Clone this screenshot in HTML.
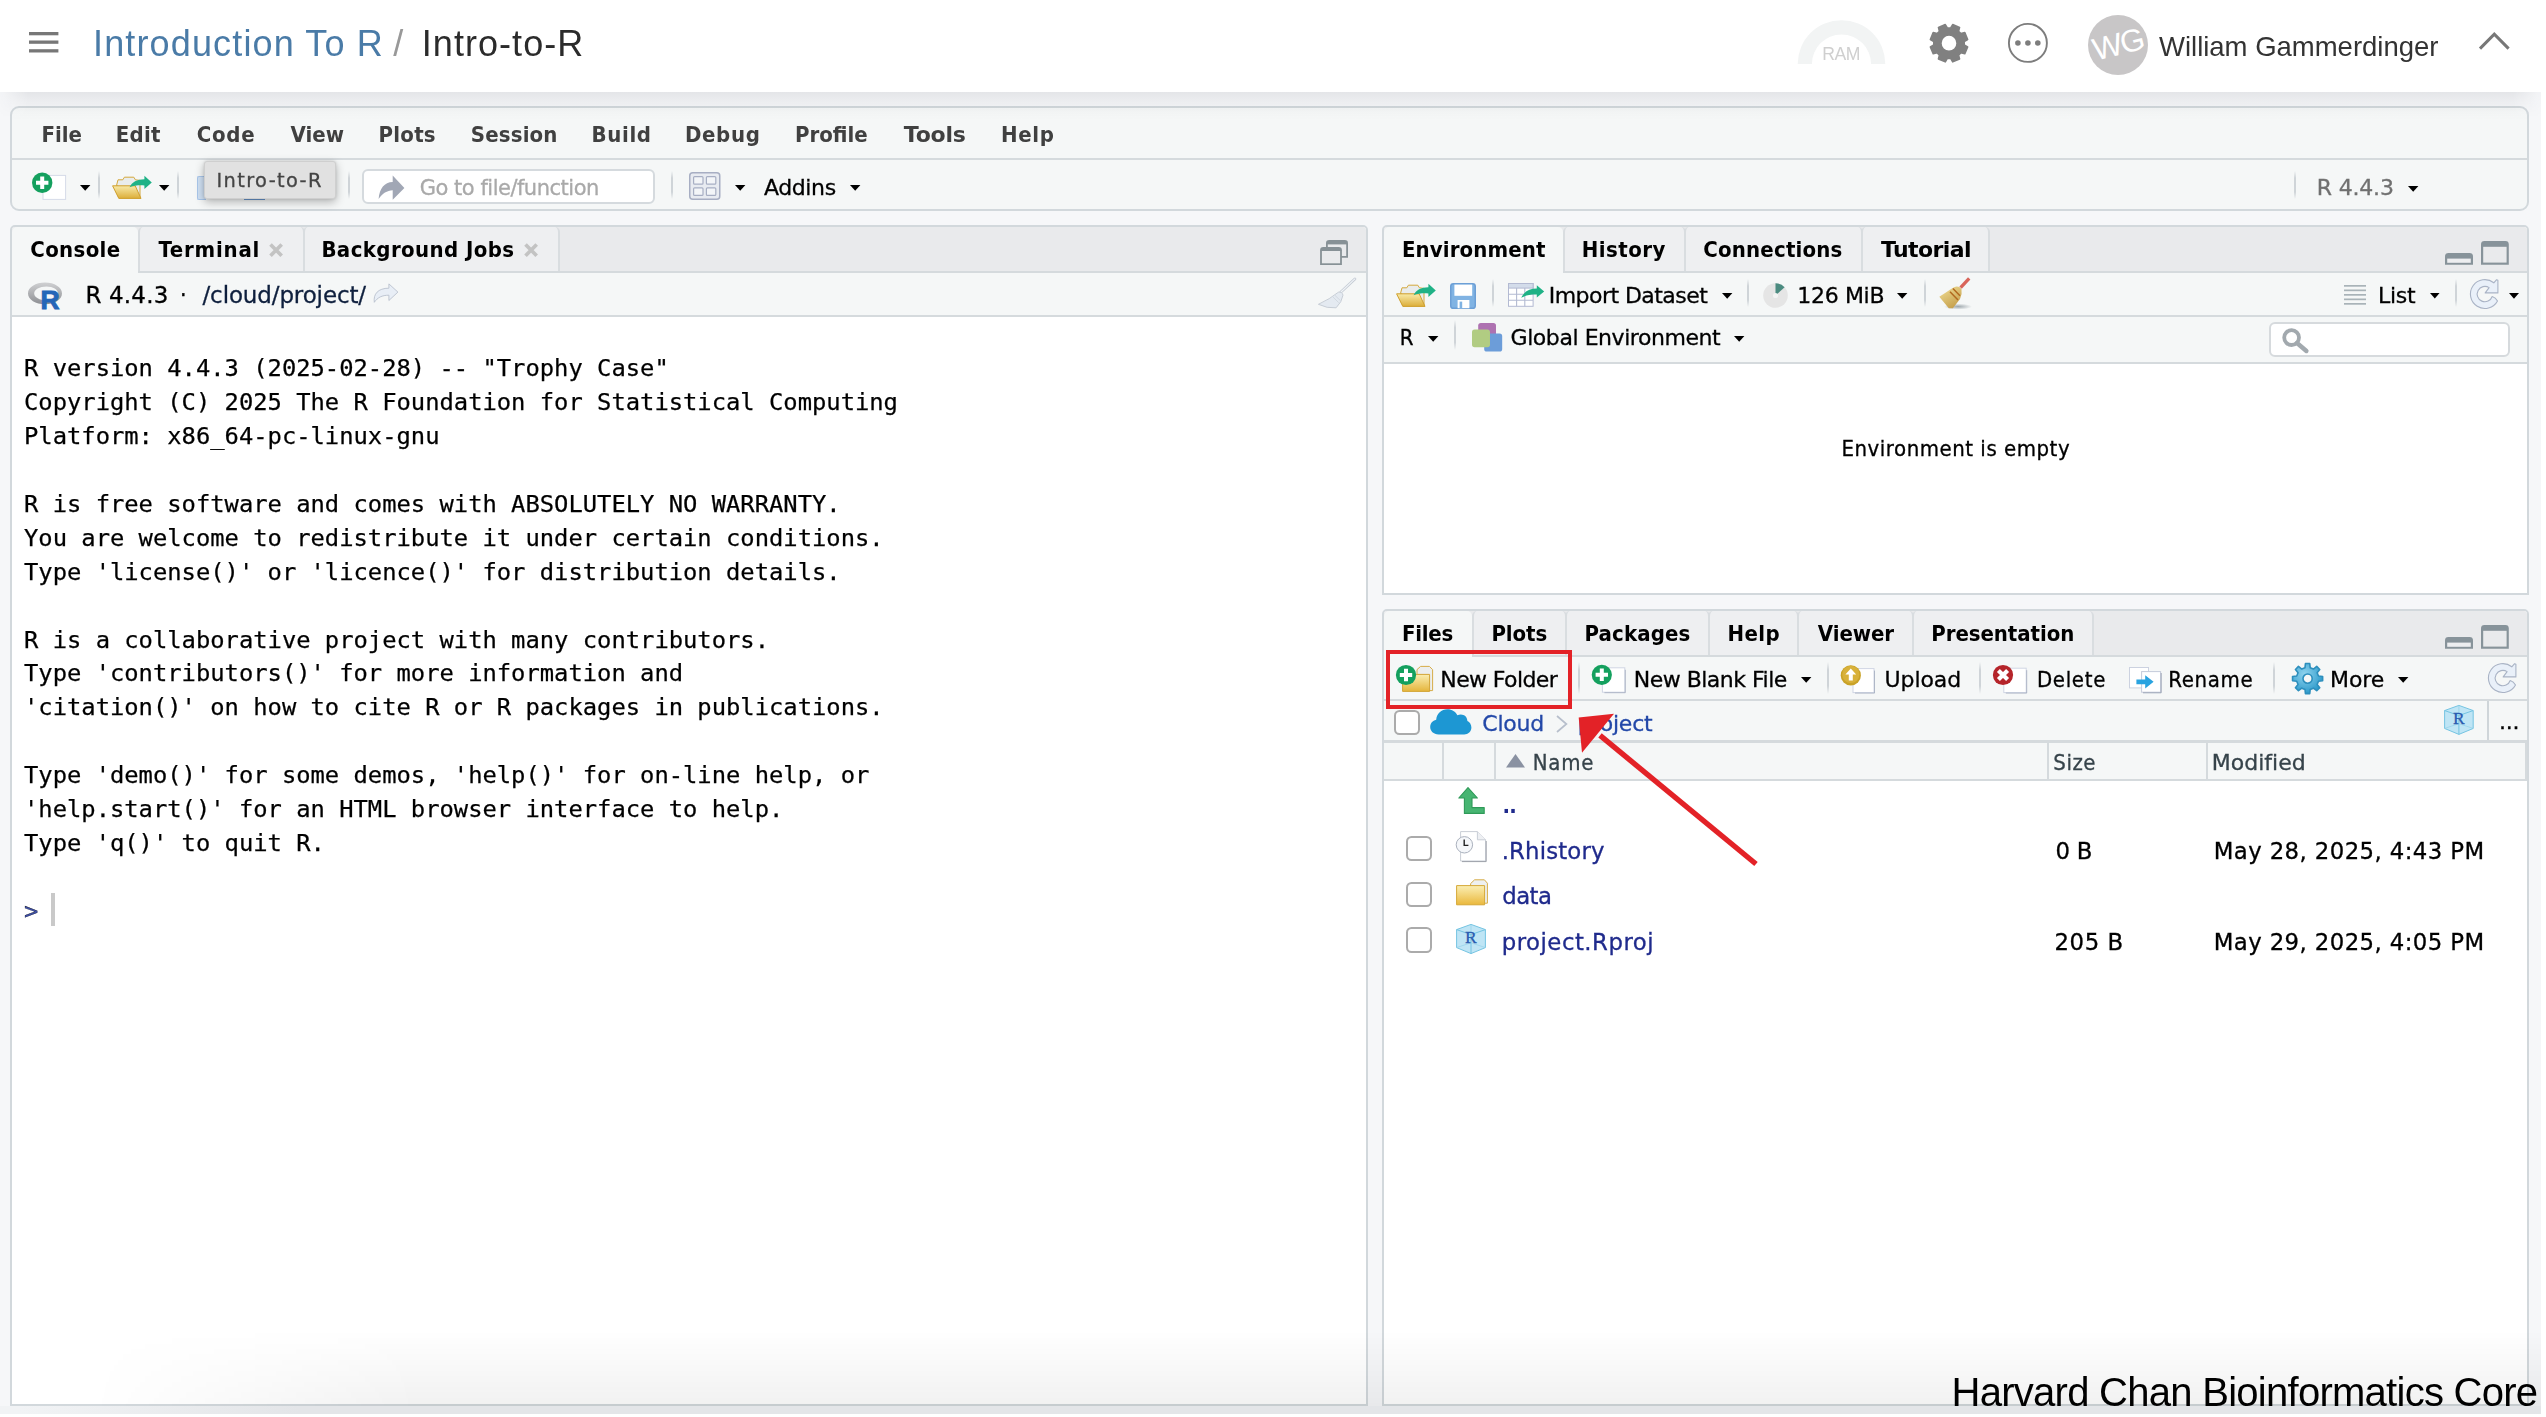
<!DOCTYPE html>
<html lang="en"><head><meta charset="utf-8"><title>Intro-to-R - Posit Cloud</title><style>
html,body{margin:0;padding:0;}
body{width:2546px;height:1417px;overflow:hidden;background:#fff;position:relative;}
#root{position:absolute;left:0;top:0;width:2546px;height:1417px;overflow:hidden;background:#f6f7f9;}
#tx{position:absolute;left:0;top:0;width:2546px;height:1417px;will-change:transform;}
.t{position:absolute;line-height:1;white-space:pre;}
.n{-webkit-text-stroke:0.3px currentColor;}
pre{margin:0;}
</style></head>
<body><div id="root">
<div style="position:absolute;left:0px;top:0px;width:2546px;height:92px;background:#fff;"></div>
<svg style="position:absolute;left:29.4px;top:31.8px;overflow:visible;" width="29.4" height="20.6" viewBox="0 0 29.4 20.6"><rect x="0" y="0" width="29.4" height="3.3" fill="#777"/><rect x="0" y="8.5" width="29.4" height="3.3" fill="#777"/><rect x="0" y="17.2" width="29.4" height="3.3" fill="#777"/></svg>
<svg style="position:absolute;left:0px;top:0px;overflow:visible;" width="2546" height="92" viewBox="0 0 2546 92"><path d="M1797.7 64A43.8 43.8 0 0 1 1885.3 64H1871.1A29.6 29.6 0 0 0 1811.9 64Z" fill="#f2f4f4"/></svg>
<svg style="position:absolute;left:0px;top:0px;overflow:visible;" width="2546" height="92" viewBox="0 0 2546 92"><path d="M1950.68 27.99 L1952.71 24.57 L1959.56 27.40 L1958.57 31.26 L1960.94 33.63 L1964.80 32.64 L1967.63 39.49 L1964.21 41.52 L1964.21 44.88 L1967.63 46.91 L1964.80 53.76 L1960.94 52.77 L1958.57 55.14 L1959.56 59.00 L1952.71 61.83 L1950.68 58.41 L1947.32 58.41 L1945.29 61.83 L1938.44 59.00 L1939.43 55.14 L1937.06 52.77 L1933.20 53.76 L1930.37 46.91 L1933.79 44.88 L1933.79 41.52 L1930.37 39.49 L1933.20 32.64 L1937.06 33.63 L1939.43 31.26 L1938.44 27.40 L1945.29 24.57 L1947.32 27.99Z M1957.1 43.2 A8.1 8.1 0 1 0 1940.9 43.2 A8.1 8.1 0 1 0 1957.1 43.2Z" fill="#808080" fill-rule="evenodd" stroke="#808080" stroke-width="1.6" stroke-linejoin="round"/></svg>
<svg style="position:absolute;left:0px;top:0px;overflow:visible;" width="2546" height="92" viewBox="0 0 2546 92"><circle cx="2027.9" cy="42.9" r="19" fill="none" stroke="#7d7d7d" stroke-width="1.9"/><circle cx="2017.9" cy="43" r="2.8" fill="#7d7d7d"/><circle cx="2027.9" cy="43" r="2.8" fill="#7d7d7d"/><circle cx="2037.8" cy="43" r="2.8" fill="#7d7d7d"/></svg>
<div style="position:absolute;left:2088px;top:15px;width:60px;height:60px;border-radius:50%;background:#c8c6c7;overflow:hidden;"></div>
<div style="position:absolute;left:2088px;top:15px;width:60px;height:60px;border-radius:50%;overflow:hidden;"><div style="position:absolute;left:-3.5px;top:14px;width:66px;text-align:center;font-family:'Liberation Sans',sans-serif;font-size:31.5px;line-height:1;color:#fff;transform:rotate(-14deg);letter-spacing:-1.6px;">WG</div></div>
<svg style="position:absolute;left:2478px;top:31px;overflow:visible;" width="33" height="20" viewBox="0 0 33 20"><path d="M2 17.6L16.3 3.2L30.6 17.6" fill="none" stroke="#777" stroke-width="3"/></svg>
<div style="position:absolute;left:10.1px;top:106px;width:2518.9px;height:104.6px;box-sizing:border-box;border:2.1px solid #d2d8dc;border-radius:9px;background:#f5f7f7;"></div>
<div style="position:absolute;left:12px;top:158px;width:2515px;height:2px;background:#d5dadd;"></div>
<div style="position:absolute;left:0px;top:92px;width:2541px;height:28px;background:linear-gradient(to bottom,rgba(28,32,44,0.078),rgba(28,32,44,0.043) 35%,rgba(28,32,44,0.012) 75%,rgba(28,32,44,0));-webkit-mask-image:linear-gradient(to right,rgba(0,0,0,0.15) 0,#000 28px,#000 2513px,rgba(0,0,0,0.15) 2541px);mask-image:linear-gradient(to right,rgba(0,0,0,0.15) 0,#000 28px,#000 2513px,rgba(0,0,0,0.15) 2541px);"></div>
<svg style="position:absolute;left:30px;top:170px;overflow:visible;" width="40" height="32" viewBox="0 0 40 32">
<rect x="13" y="5.4" width="22.6" height="24" fill="#fff" stroke="#d5dbe8" stroke-width="1"/>
<circle cx="12.2" cy="12.8" r="10.2" fill="#14a05e"/>
<path d="M12.2 6.6V19M6 12.8H18.4" stroke="#fff" stroke-width="4"/></svg>
<svg style="position:absolute;left:79.7px;top:184.7px;overflow:visible;" width="10.4" height="5.8" viewBox="0 0 10.4 5.8"><path d="M0 0H10.4L5.2 5.8Z" fill="#000"/></svg>
<div style="position:absolute;left:97.7px;top:171px;width:2px;height:28px;background:linear-gradient(to bottom,rgba(205,210,214,0),#cfd4d8 25%,#cfd4d8 75%,rgba(205,210,214,0));"></div>
<svg style="position:absolute;left:111.6px;top:175.4px;overflow:visible;" width="40" height="25" viewBox="0 0 40 25">
<defs><linearGradient id="fo" x1="0" y1="0" x2="0" y2="1"><stop offset="0" stop-color="#f8eaa8"/><stop offset="1" stop-color="#dcae3a"/></linearGradient></defs>
<path d="M4.5 10.5L6 4.8L10.8 4.8L12.4 2.2L21.8 2.2L23.4 4.8L28 5.4L28 22Z" fill="#e9ecec" stroke="#d4a83c" stroke-width="1"/>
<path d="M0.6 10.8H23.2L29 23.4H6.8Z" fill="url(#fo)" stroke="#cf9f2c" stroke-width="1" stroke-linejoin="round"/>
<path d="M17.6 12.2C20 7 25 4.2 32.4 4.2V0.8L39.8 7.4L32.4 14V10.4C27 10.1 22 10.4 17.6 12.2Z" fill="#1fb286"/></svg>
<svg style="position:absolute;left:158.9px;top:184.7px;overflow:visible;" width="10.4" height="5.8" viewBox="0 0 10.4 5.8"><path d="M0 0H10.4L5.2 5.8Z" fill="#000"/></svg>
<div style="position:absolute;left:176.6px;top:171px;width:2px;height:28px;background:linear-gradient(to bottom,rgba(205,210,214,0),#cfd4d8 25%,#cfd4d8 75%,rgba(205,210,214,0));"></div>
<div style="position:absolute;left:197px;top:176px;width:9px;height:23.5px;background:#cfe0f3;border:1px solid #a9c6ea;border-right:none;box-sizing:border-box;border-radius:2px 0 0 2px;"></div>
<div style="position:absolute;left:244.4px;top:197.5px;width:20.6px;height:2.4px;background:#6b98cf;"></div>
<div style="position:absolute;left:204.2px;top:161.2px;width:131.4px;height:38px;box-sizing:border-box;background:#e1e1e1;border:1px solid #cfcfcf;border-radius:3px;box-shadow:0 3px 10px rgba(0,0,0,0.28),0 0 3px rgba(0,0,0,0.12);"></div>
<div style="position:absolute;left:347.7px;top:171px;width:2px;height:28px;background:linear-gradient(to bottom,rgba(205,210,214,0),#cfd4d8 25%,#cfd4d8 75%,rgba(205,210,214,0));"></div>
<div style="position:absolute;left:362.1px;top:169.1px;width:292.6px;height:34.7px;box-sizing:border-box;background:#fff;border:2px solid #d5dade;border-radius:6px;"></div>
<svg style="position:absolute;left:377.5px;top:175px;overflow:visible;" width="27" height="25.5" viewBox="0 0 27 25.5"><path d="M0.6 23.9C1.6 13 6.4 7.2 14.7 6.9V0.6L26.4 12.9L14.7 24.8V15.2C9 15.4 4.6 18.4 0.6 23.9Z" fill="#a1a7b5"/></svg>
<div style="position:absolute;left:670.7px;top:171px;width:2px;height:28px;background:linear-gradient(to bottom,rgba(205,210,214,0),#cfd4d8 25%,#cfd4d8 75%,rgba(205,210,214,0));"></div>
<svg style="position:absolute;left:689px;top:172px;overflow:visible;" width="31.5" height="28" viewBox="0 0 31.5 28"><rect x="0.75" y="0.75" width="30" height="26.5" rx="3" fill="#e8ebf1" stroke="#a7aec3" stroke-width="1.5"/>
<rect x="4.6" y="4.6" width="9.4" height="7.6" rx="1" fill="#f3f5f8" stroke="#a7aec3" stroke-width="1.2"/><rect x="17.4" y="4.6" width="9.4" height="7.6" rx="1" fill="#f3f5f8" stroke="#a7aec3" stroke-width="1.2"/>
<rect x="4.6" y="15.8" width="9.4" height="7.6" rx="1" fill="#f3f5f8" stroke="#a7aec3" stroke-width="1.2"/><rect x="17.4" y="15.8" width="9.4" height="7.6" rx="1" fill="#f3f5f8" stroke="#a7aec3" stroke-width="1.2"/></svg>
<svg style="position:absolute;left:734.9px;top:184.7px;overflow:visible;" width="10.4" height="5.8" viewBox="0 0 10.4 5.8"><path d="M0 0H10.4L5.2 5.8Z" fill="#000"/></svg>
<svg style="position:absolute;left:849.9px;top:184.7px;overflow:visible;" width="10.4" height="5.8" viewBox="0 0 10.4 5.8"><path d="M0 0H10.4L5.2 5.8Z" fill="#000"/></svg>
<div style="position:absolute;left:2293.9px;top:171px;width:2px;height:28px;background:linear-gradient(to bottom,rgba(205,210,214,0),#cfd4d8 25%,#cfd4d8 75%,rgba(205,210,214,0));"></div>
<svg style="position:absolute;left:2408px;top:185.7px;overflow:visible;" width="10.4" height="5.8" viewBox="0 0 10.4 5.8"><path d="M0 0H10.4L5.2 5.8Z" fill="#000"/></svg>
<div style="position:absolute;left:10.1px;top:225.1px;width:1357.9px;height:1180.5px;box-sizing:border-box;border:2.1px solid #d2d8dc;border-radius:5px 5px 0 0;background:#fff;overflow:hidden;"></div>
<div style="position:absolute;left:12.1px;top:227.1px;width:1353.9px;height:44px;background:#e9eaec;border-radius:3px 3px 0 0;"></div>
<div style="position:absolute;left:12.1px;top:270.8px;width:1353.9px;height:2.1px;background:#d5dadd;"></div>
<div style="position:absolute;left:138.2px;top:227.1px;width:166.40000000000003px;height:43.7px;box-sizing:border-box;background:#eeeff1;border-left:2px solid #d9dde0;border-right:2px solid #d9dde0;border-radius:5px 5px 0 0;"></div>
<div style="position:absolute;left:302.6px;top:227.1px;width:257.0px;height:43.7px;box-sizing:border-box;background:#eeeff1;border-left:2px solid #d9dde0;border-right:2px solid #d9dde0;border-radius:5px 5px 0 0;"></div>
<div style="position:absolute;left:12.1px;top:227.1px;width:126.1px;height:45.8px;box-sizing:border-box;background:#f5f7f7;border-radius:5px 5px 0 0;"></div>
<div style="position:absolute;left:12.1px;top:272.9px;width:1353.9px;height:42.19999999999999px;background:#f5f7f7;"></div>
<div style="position:absolute;left:12.1px;top:315.09999999999997px;width:1353.9px;height:2.1px;background:#d5dadd;"></div>
<svg style="position:absolute;left:268.9px;top:242.9px;overflow:visible;" width="14.2" height="14.2" viewBox="0 0 14.2 14.2"><path d="M1.5 1.5L12.7 12.7M12.7 1.5L1.5 12.7" stroke="#c3c3c3" stroke-width="3.7"/></svg>
<svg style="position:absolute;left:524.0px;top:242.9px;overflow:visible;" width="14.2" height="14.2" viewBox="0 0 14.2 14.2"><path d="M1.5 1.5L12.7 12.7M12.7 1.5L1.5 12.7" stroke="#c3c3c3" stroke-width="3.7"/></svg>
<svg style="position:absolute;left:1320px;top:240px;overflow:visible;" width="28.5" height="25.5" viewBox="0 0 28.5 25.5"><path d="M6 17.8V3.2Q6 0 9.2 0H24.8Q28 0 28 3.2V17.8Z" fill="#879196"/><rect x="7.8" y="4.4" width="18.4" height="11.6" fill="#e9eaec"/><path d="M0.1 25.1V10.2Q0.1 7 3.3000000000000003 7H18.700000000000003Q21.900000000000002 7 21.900000000000002 10.2V25.1Z" fill="#879196"/><rect x="1.9" y="11" width="18.2" height="12.3" fill="#e9eaec"/></svg>
<svg style="position:absolute;left:27.5px;top:282px;overflow:visible;" width="36" height="28" viewBox="0 0 36 28"><defs><linearGradient id="rg" x1="0" y1="0" x2="0" y2="1"><stop offset="0" stop-color="#cfd0d2"/><stop offset="1" stop-color="#8e9094"/></linearGradient></defs>
<path d="M17 0.6C26.4 0.6 34 5.4 34 11.4C34 17.4 26.4 22.2 17 22.2C7.6 22.2 0 17.4 0 11.4C0 5.4 7.6 0.6 17 0.6ZM18.4 4.6C11.6 4.6 6.2 7.6 6.2 11.4C6.2 15.2 11.6 18.2 18.4 18.2C25.2 18.2 30 15.2 30 11.4C30 7.6 25.2 4.6 18.4 4.6Z" fill="url(#rg)" fill-rule="evenodd"/>
<text x="12.6" y="26.7" font-family="'Liberation Sans',sans-serif" font-weight="bold" font-size="26.4" fill="#2466b8" stroke="#2466b8" stroke-width="0.9">R</text></svg>
<svg style="position:absolute;left:372.5px;top:283px;overflow:visible;" width="26" height="20" viewBox="0 0 26 20"><path d="M1.3 19.3C0.2 11 5 5.2 15.9 5.2V0.9L24.9 9.1L15.9 17.5V12.2C9 12.2 4.5 14.5 1.3 19.3Z" fill="#e8eef6" stroke="#b9c1ce" stroke-width="0.9" stroke-linejoin="round"/></svg>
<svg style="position:absolute;left:1318px;top:278px;overflow:visible;" width="38.5" height="30.5" viewBox="0 0 38.5 30.5"><path d="M36.9 0.9L22.9 14" stroke="#c3cad3" stroke-width="2.8" stroke-linecap="round"/><path d="M36.9 0.9L22.9 14" stroke="#f0f3f7" stroke-width="1.2" stroke-linecap="round"/><path d="M20.4 14.2Q24 13.4 25 17.1Q24 24 18.1 29.8Q9 30.6 0.4 26.3Q12 21 20.4 14.2Z" fill="#e4eaf1" stroke="#c3cad3" stroke-width="0.9"/><path d="M17 17.4L22.4 22.6M15 19L20.6 24.6" stroke="#cdd4dc" stroke-width="0.8"/></svg>
<pre style="position:absolute;left:24.3px;top:352.0px;font-family:'DejaVu Sans Mono','Liberation Mono',monospace;font-size:23.8px;line-height:33.93px;color:#000;will-change:transform;-webkit-text-stroke:0.25px #000;">R version 4.4.3 (2025-02-28) -- "Trophy Case"
Copyright (C) 2025 The R Foundation for Statistical Computing
Platform: x86_64-pc-linux-gnu

R is free software and comes with ABSOLUTELY NO WARRANTY.
You are welcome to redistribute it under certain conditions.
Type 'license()' or 'licence()' for distribution details.

R is a collaborative project with many contributors.
Type 'contributors()' for more information and
'citation()' on how to cite R or R packages in publications.

Type 'demo()' for some demos, 'help()' for on-line help, or
'help.start()' for an HTML browser interface to help.
Type 'q()' to quit R.

<span style="color:#3d4fa8">&gt;</span></pre>
<div style="position:absolute;left:51.2px;top:892.6px;width:3.6px;height:33.4px;background:#c9c9c9;"></div>
<div style="position:absolute;left:1382.1px;top:225.1px;width:1146.8000000000002px;height:369.79999999999995px;box-sizing:border-box;border:2.1px solid #d2d8dc;border-radius:5px 5px 0 0;background:#fff;overflow:hidden;"></div>
<div style="position:absolute;left:1384.1px;top:227.1px;width:1142.8000000000002px;height:44px;background:#e9eaec;border-radius:3px 3px 0 0;"></div>
<div style="position:absolute;left:1384.1px;top:270.8px;width:1142.8000000000002px;height:2.1px;background:#d5dadd;"></div>
<div style="position:absolute;left:1562.6px;top:227.1px;width:123.20000000000005px;height:43.7px;box-sizing:border-box;background:#eeeff1;border-left:2px solid #d9dde0;border-right:2px solid #d9dde0;border-radius:5px 5px 0 0;"></div>
<div style="position:absolute;left:1683.8px;top:227.1px;width:179.10000000000014px;height:43.7px;box-sizing:border-box;background:#eeeff1;border-left:2px solid #d9dde0;border-right:2px solid #d9dde0;border-radius:5px 5px 0 0;"></div>
<div style="position:absolute;left:1860.9px;top:227.1px;width:129.0999999999999px;height:43.7px;box-sizing:border-box;background:#eeeff1;border-left:2px solid #d9dde0;border-right:2px solid #d9dde0;border-radius:5px 5px 0 0;"></div>
<div style="position:absolute;left:1384.1px;top:227.1px;width:178.5px;height:45.8px;box-sizing:border-box;background:#f5f7f7;border-radius:5px 5px 0 0;"></div>
<div style="position:absolute;left:1384.1px;top:272.9px;width:1142.8000000000002px;height:42.150000000000034px;background:#f5f7f7;"></div>
<div style="position:absolute;left:1384.1px;top:315.05px;width:1142.8000000000002px;height:2.1px;background:#d5dadd;"></div>
<div style="position:absolute;left:1384.1px;top:317.15000000000003px;width:1142.8000000000002px;height:44.69999999999993px;background:#f5f7f7;"></div>
<div style="position:absolute;left:1384.1px;top:361.84999999999997px;width:1142.8000000000002px;height:2.1px;background:#d5dadd;"></div>
<svg style="position:absolute;left:2445px;top:253.1px;overflow:visible;" width="28" height="11.8" viewBox="0 0 28 11.8"><path d="M0 11.8V3.4Q0 0 3.4 0H24.6Q28 0 28 3.4V11.8Z" fill="#87939a"/><rect x="2.2" y="5.6" width="23.6" height="4.2" fill="#edeef0"/></svg>
<svg style="position:absolute;left:2481.1px;top:241.1px;overflow:visible;" width="27.8" height="23.8" viewBox="0 0 27.8 23.8"><path d="M0 23.8V3.4Q0 0 3.4 0H24.4Q27.8 0 27.8 3.4V23.8Z" fill="#87939a"/><rect x="2.2" y="5.8" width="23.4" height="15.8" fill="#e9eaec"/></svg>
<svg style="position:absolute;left:1396px;top:283px;overflow:visible;" width="40" height="25" viewBox="0 0 40 25">
<defs><linearGradient id="fo" x1="0" y1="0" x2="0" y2="1"><stop offset="0" stop-color="#f8eaa8"/><stop offset="1" stop-color="#dcae3a"/></linearGradient></defs>
<path d="M4.5 10.5L6 4.8L10.8 4.8L12.4 2.2L21.8 2.2L23.4 4.8L28 5.4L28 22Z" fill="#e9ecec" stroke="#d4a83c" stroke-width="1"/>
<path d="M0.6 10.8H23.2L29 23.4H6.8Z" fill="url(#fo)" stroke="#cf9f2c" stroke-width="1" stroke-linejoin="round"/>
<path d="M17.6 12.2C20 7 25 4.2 32.4 4.2V0.8L39.8 7.4L32.4 14V10.4C27 10.1 22 10.4 17.6 12.2Z" fill="#1fb286"/></svg>
<svg style="position:absolute;left:1450.2px;top:283px;overflow:visible;" width="26" height="26" viewBox="0 0 26 26"><rect x="0.75" y="0.75" width="24.5" height="24.5" rx="2.6" fill="#80b3e3" stroke="#6c9fd6" stroke-width="1.5"/>
<rect x="4.4" y="1.6" width="17.8" height="11.2" fill="#fff"/><rect x="7.6" y="17" width="11.8" height="8.2" fill="#fff"/><rect x="9.6" y="18.6" width="2.6" height="6.6" fill="#80b3e3"/></svg>
<div style="position:absolute;left:1492px;top:279px;width:2px;height:28px;background:linear-gradient(to bottom,rgba(205,210,214,0),#cfd4d8 25%,#cfd4d8 75%,rgba(205,210,214,0));"></div>
<svg style="position:absolute;left:1507.8px;top:283px;overflow:visible;" width="37" height="24" viewBox="0 0 37 24"><rect x="0.5" y="0.5" width="24.6" height="22.8" fill="#fff" stroke="#b3bad2" stroke-width="1"/>
<rect x="0.5" y="0.5" width="24.6" height="4.6" fill="#d3dcea" stroke="#b3bad2" stroke-width="1"/>
<path d="M0.5 11.2H25M0.5 17.2H25M8.6 5V23.2M16.8 5V23.2" stroke="#b3bad2" stroke-width="1.1" fill="none"/>
<path d="M13.2 14.8C16 9 21 5.6 28.8 5.6V2.2L36.2 8.4L28.8 14.6V11.6C23 11.3 18 12.2 13.2 14.8Z" fill="#1fb286"/></svg>
<svg style="position:absolute;left:1721.7px;top:292.6px;overflow:visible;" width="10.4" height="5.8" viewBox="0 0 10.4 5.8"><path d="M0 0H10.4L5.2 5.8Z" fill="#000"/></svg>
<div style="position:absolute;left:1746.9px;top:279px;width:2px;height:28px;background:linear-gradient(to bottom,rgba(205,210,214,0),#cfd4d8 25%,#cfd4d8 75%,rgba(205,210,214,0));"></div>
<svg style="position:absolute;left:1762.5px;top:283.4px;overflow:visible;" width="25" height="25" viewBox="0 0 25 25"><circle cx="12.5" cy="12.5" r="12.3" fill="#e5e5e5"/><path d="M12.5 12.5V0.2A12.3 12.3 0 0 1 21.6 4.2Z" fill="#4b8b80"/><circle cx="12.5" cy="12.5" r="2.6" fill="#f3f3f3"/></svg>
<svg style="position:absolute;left:1897.4px;top:292.6px;overflow:visible;" width="10.4" height="5.8" viewBox="0 0 10.4 5.8"><path d="M0 0H10.4L5.2 5.8Z" fill="#000"/></svg>
<div style="position:absolute;left:1923.6px;top:279px;width:2px;height:28px;background:linear-gradient(to bottom,rgba(205,210,214,0),#cfd4d8 25%,#cfd4d8 75%,rgba(205,210,214,0));"></div>
<svg style="position:absolute;left:1938.6px;top:277.6px;overflow:visible;" width="33" height="32" viewBox="0 0 33 32"><defs><linearGradient id="bh" x1="0" y1="0" x2="0.6" y2="1"><stop offset="0" stop-color="#f2e19a"/><stop offset="1" stop-color="#c6a04c"/></linearGradient>
<radialGradient id="bs" cx="0.5" cy="0.5" r="0.5"><stop offset="0" stop-color="#8e999f" stop-opacity="0.85"/><stop offset="1" stop-color="#8e999f" stop-opacity="0"/></radialGradient></defs>
<ellipse cx="19" cy="28.6" rx="14" ry="3" fill="url(#bs)"/>
<path d="M30.2 0.4L21.6 9.6" stroke="#d9655a" stroke-width="3.3" stroke-linecap="butt"/>
<path d="M15.1 9.2Q19.5 7.4 22.5 11Q23.4 16 21 21.1L13.9 30.3H9.8L0.3 18.7L8 13.7Q11.6 11 15.1 9.2Z" fill="url(#bh)"/>
<path d="M13.9 10.4L21 17.8M11 13.7L19 22" stroke="#b2691f" stroke-width="1.5"/></svg>
<svg style="position:absolute;left:2344px;top:285px;overflow:visible;" width="22" height="20" viewBox="0 0 22 20"><rect x="0" y="0.0" width="22" height="1.7" fill="#a9b3b8"/><rect x="0" y="4.5" width="22" height="1.7" fill="#a9b3b8"/><rect x="0" y="9.0" width="22" height="1.7" fill="#a9b3b8"/><rect x="0" y="13.5" width="22" height="1.7" fill="#a9b3b8"/><rect x="0" y="18.0" width="22" height="1.7" fill="#a9b3b8"/></svg>
<svg style="position:absolute;left:2429.6px;top:292.6px;overflow:visible;" width="9.6" height="5.6" viewBox="0 0 9.6 5.6"><path d="M0 0H9.6L4.8 5.6Z" fill="#000"/></svg>
<div style="position:absolute;left:2454.8px;top:279px;width:2px;height:28px;background:linear-gradient(to bottom,rgba(205,210,214,0),#cfd4d8 25%,#cfd4d8 75%,rgba(205,210,214,0));"></div>
<svg style="position:absolute;left:2470.0px;top:278.8px;overflow:visible;" width="29" height="31" viewBox="0 0 29 31"><path d="M23.8 3.8L26.6 0.7L27.9 1.3V13.9H15.2L19.1 8.6A7.7 7.7 0 1 0 22.2 17.5Q25.6 18.4 27.5 21.9A14.4 14.4 0 1 1 23.8 3.8Z" fill="#e9f0f9" stroke="#a9b3c5" stroke-width="1.1" stroke-linejoin="round"/></svg>
<svg style="position:absolute;left:2509px;top:293px;overflow:visible;" width="10" height="5.8" viewBox="0 0 10 5.8"><path d="M0 0H10L5.0 5.8Z" fill="#000"/></svg>
<svg style="position:absolute;left:1428px;top:335.6px;overflow:visible;" width="10.4" height="5.8" viewBox="0 0 10.4 5.8"><path d="M0 0H10.4L5.2 5.8Z" fill="#000"/></svg>
<div style="position:absolute;left:1453.8px;top:320px;width:2px;height:30px;background:linear-gradient(to bottom,rgba(205,210,214,0),#cfd4d8 25%,#cfd4d8 75%,rgba(205,210,214,0));"></div>
<svg style="position:absolute;left:1472px;top:322.6px;overflow:visible;" width="30.4" height="28.6" viewBox="0 0 30.4 28.6"><rect x="6.2" y="0" width="17.8" height="18.2" rx="2.6" fill="#ae72b1"/><rect x="12.2" y="10.4" width="18" height="18.2" rx="2.6" fill="#6c9dd9"/><rect x="0" y="6.6" width="18" height="17.6" rx="2.6" fill="#b1cc82"/></svg>
<svg style="position:absolute;left:1733.6px;top:335.6px;overflow:visible;" width="10.4" height="5.8" viewBox="0 0 10.4 5.8"><path d="M0 0H10.4L5.2 5.8Z" fill="#000"/></svg>
<div style="position:absolute;left:2268.6px;top:322.4px;width:241.6px;height:34.2px;box-sizing:border-box;background:#fff;border:2px solid #d6dadd;border-radius:6px;"></div>
<svg style="position:absolute;left:2282px;top:328px;overflow:visible;" width="27" height="25" viewBox="0 0 27 25"><circle cx="9.6" cy="9.6" r="7.4" fill="none" stroke="#a2a9ae" stroke-width="3.8"/><path d="M15 15L24.4 23" stroke="#a2a9ae" stroke-width="4.4" stroke-linecap="round"/></svg>
<div style="position:absolute;left:1382.1px;top:609.2px;width:1146.8000000000002px;height:796.3999999999999px;box-sizing:border-box;border:2.1px solid #d2d8dc;border-radius:5px 5px 0 0;background:#fff;overflow:hidden;"></div>
<div style="position:absolute;left:1384.1px;top:611.2px;width:1142.8000000000002px;height:44px;background:#e9eaec;border-radius:3px 3px 0 0;"></div>
<div style="position:absolute;left:1384.1px;top:654.9000000000001px;width:1142.8000000000002px;height:2.1px;background:#d5dadd;"></div>
<div style="position:absolute;left:1472.2px;top:611.2px;width:94.79999999999995px;height:43.7px;box-sizing:border-box;background:#eeeff1;border-left:2px solid #d9dde0;border-right:2px solid #d9dde0;border-radius:5px 5px 0 0;"></div>
<div style="position:absolute;left:1565px;top:611.2px;width:145px;height:43.7px;box-sizing:border-box;background:#eeeff1;border-left:2px solid #d9dde0;border-right:2px solid #d9dde0;border-radius:5px 5px 0 0;"></div>
<div style="position:absolute;left:1708px;top:611.2px;width:91px;height:43.7px;box-sizing:border-box;background:#eeeff1;border-left:2px solid #d9dde0;border-right:2px solid #d9dde0;border-radius:5px 5px 0 0;"></div>
<div style="position:absolute;left:1797px;top:611.2px;width:117px;height:43.7px;box-sizing:border-box;background:#eeeff1;border-left:2px solid #d9dde0;border-right:2px solid #d9dde0;border-radius:5px 5px 0 0;"></div>
<div style="position:absolute;left:1912px;top:611.2px;width:181.80000000000018px;height:43.7px;box-sizing:border-box;background:#eeeff1;border-left:2px solid #d9dde0;border-right:2px solid #d9dde0;border-radius:5px 5px 0 0;"></div>
<div style="position:absolute;left:1384.1px;top:611.2px;width:88.10000000000014px;height:45.8px;box-sizing:border-box;background:#f5f7f7;border-radius:5px 5px 0 0;"></div>
<div style="position:absolute;left:1384.1px;top:657.0px;width:1142.8000000000002px;height:41.85000000000002px;background:#f5f7f7;"></div>
<div style="position:absolute;left:1384.1px;top:698.85px;width:1142.8000000000002px;height:2.1px;background:#d5dadd;"></div>
<div style="position:absolute;left:1384.1px;top:700.9499999999999px;width:1142.8000000000002px;height:39.500000000000114px;background:#f5f7f7;"></div>
<div style="position:absolute;left:1384.1px;top:740.45px;width:1142.8000000000002px;height:2.1px;background:#d5dadd;"></div>
<div style="position:absolute;left:1384.1px;top:742.55px;width:1142.8000000000002px;height:36.450000000000045px;background:#f5f7f7;"></div>
<div style="position:absolute;left:1384.1px;top:779.0px;width:1142.8000000000002px;height:2.1px;background:#d5dadd;"></div>
<svg style="position:absolute;left:2445px;top:637.1px;overflow:visible;" width="28" height="11.8" viewBox="0 0 28 11.8"><path d="M0 11.8V3.4Q0 0 3.4 0H24.6Q28 0 28 3.4V11.8Z" fill="#87939a"/><rect x="2.2" y="5.6" width="23.6" height="4.2" fill="#edeef0"/></svg>
<svg style="position:absolute;left:2481.1px;top:625.1px;overflow:visible;" width="27.8" height="23.8" viewBox="0 0 27.8 23.8"><path d="M0 23.8V3.4Q0 0 3.4 0H24.4Q27.8 0 27.8 3.4V23.8Z" fill="#87939a"/><rect x="2.2" y="5.8" width="23.4" height="15.8" fill="#e9eaec"/></svg>
<svg style="position:absolute;left:1395px;top:663px;overflow:visible;" width="40" height="32" viewBox="0 0 40 32"><defs><linearGradient id="fg" x1="0" y1="0" x2="0" y2="1"><stop offset="0" stop-color="#faedb0"/><stop offset="1" stop-color="#e5b53c"/></linearGradient></defs>
<path d="M22 6.6L25.6 3.4H34.4L37.6 6.6V27.6H22Z" fill="#eceeee" stroke="#d6ad48" stroke-width="1"/>
<path d="M7.6 11.4H34.6V28.4H7.6Z" fill="url(#fg)" stroke="#d3a536" stroke-width="1"/><circle cx="11" cy="12" r="10.1" fill="#14a05e"/><path d="M11 5.8V18.2M4.8 12H17.2" stroke="#fff" stroke-width="4"/></svg>
<div style="position:absolute;left:1577.7px;top:662px;width:2px;height:32px;background:linear-gradient(to bottom,rgba(205,210,214,0),#cfd4d8 25%,#cfd4d8 75%,rgba(205,210,214,0));"></div>
<svg style="position:absolute;left:1590px;top:663px;overflow:visible;" width="40" height="32" viewBox="0 0 40 32"><rect x="12.4" y="4.8" width="22.4" height="24.4" fill="#fff" stroke="#d0d6e4" stroke-width="1"/><path d="M35.3 6.8V29.7H14.4" stroke="#9aa3b6" stroke-width="1" fill="none" opacity="0.7"/><circle cx="11.8" cy="11.8" r="10.1" fill="#14a05e"/><path d="M11.8 5.6000000000000005V18.0M5.6000000000000005 11.8H18.0" stroke="#fff" stroke-width="4"/></svg>
<svg style="position:absolute;left:1800.8px;top:677.4px;overflow:visible;" width="10.4" height="5.8" viewBox="0 0 10.4 5.8"><path d="M0 0H10.4L5.2 5.8Z" fill="#000"/></svg>
<div style="position:absolute;left:1826.5px;top:662px;width:2px;height:32px;background:linear-gradient(to bottom,rgba(205,210,214,0),#cfd4d8 25%,#cfd4d8 75%,rgba(205,210,214,0));"></div>
<svg style="position:absolute;left:1839px;top:663px;overflow:visible;" width="40" height="32" viewBox="0 0 40 32"><rect x="14" y="5.6" width="21" height="24" fill="#fff" stroke="#d0d6e4" stroke-width="1"/><path d="M35.5 7.6V30.1H16" stroke="#9aa3b6" stroke-width="1" fill="none" opacity="0.7"/><circle cx="11.8" cy="12.4" r="10.1" fill="#c9a227"/><circle cx="11.8" cy="11.4" r="8.6" fill="#d8b13a"/><path d="M11.8 5.4L17.2 11.6H13.8V17.6H9.8V11.6H6.4Z" fill="#fff"/></svg>
<div style="position:absolute;left:1979px;top:662px;width:2px;height:32px;background:linear-gradient(to bottom,rgba(205,210,214,0),#cfd4d8 25%,#cfd4d8 75%,rgba(205,210,214,0));"></div>
<svg style="position:absolute;left:1991px;top:663px;overflow:visible;" width="40" height="32" viewBox="0 0 40 32"><rect x="12.8" y="5.2" width="22.4" height="24.4" fill="#fff" stroke="#d0d6e4" stroke-width="1"/><path d="M35.7 7.2V30.099999999999998H14.8" stroke="#9aa3b6" stroke-width="1" fill="none" opacity="0.7"/><circle cx="12" cy="12" r="10.1" fill="#b5242a"/><path d="M7.4 7.4L16.6 16.6M16.6 7.4L7.4 16.6" stroke="#fff" stroke-width="4.2"/></svg>
<svg style="position:absolute;left:2128.6px;top:667px;overflow:visible;" width="33" height="26.5" viewBox="0 0 33 26.5"><rect x="0.5" y="0.5" width="19" height="20.4" fill="#fff" stroke="#ccd2e0" stroke-width="1"/><rect x="12.6" y="4.6" width="19" height="20.6" fill="#fff" stroke="#c4cada" stroke-width="1"/><path d="M32.2 6V25.8H14" stroke="#8d97ab" stroke-width="1" fill="none" opacity="0.8"/><path d="M7.4 12.4H16.2V8.2L24.6 14.8L16.2 21.4V17.2H7.4Z" fill="#29a3e0"/></svg>
<div style="position:absolute;left:2272.6px;top:662px;width:2px;height:32px;background:linear-gradient(to bottom,rgba(205,210,214,0),#cfd4d8 25%,#cfd4d8 75%,rgba(205,210,214,0));"></div>
<svg style="position:absolute;left:2291.6px;top:662.8px;overflow:visible;" width="31.2" height="31.2" viewBox="0 0 31.2 31.2"><defs><radialGradient id="gg" cx="0.4" cy="0.35" r="0.7"><stop offset="0" stop-color="#8fd3ee"/><stop offset="1" stop-color="#2696c8"/></radialGradient></defs><path d="M12.99 4.71 L13.46 0.55 L17.74 0.55 L18.21 4.71 L21.45 6.05 L24.73 3.44 L27.76 6.47 L25.15 9.75 L26.49 12.99 L30.65 13.46 L30.65 17.74 L26.49 18.21 L25.15 21.45 L27.76 24.73 L24.73 27.76 L21.45 25.15 L18.21 26.49 L17.74 30.65 L13.46 30.65 L12.99 26.49 L9.75 25.15 L6.47 27.76 L3.44 24.73 L6.05 21.45 L4.71 18.21 L0.55 17.74 L0.55 13.46 L4.71 12.99 L6.05 9.75 L3.44 6.47 L6.47 3.44 L9.75 6.05Z M20.2 15.6A4.6 4.6 0 1 0 11 15.6A4.6 4.6 0 1 0 20.2 15.6Z" fill="url(#gg)" fill-rule="evenodd" stroke="#2d8fbd" stroke-width="1.6" stroke-linejoin="round"/></svg>
<svg style="position:absolute;left:2397.8px;top:677.4px;overflow:visible;" width="10.4" height="5.8" viewBox="0 0 10.4 5.8"><path d="M0 0H10.4L5.2 5.8Z" fill="#000"/></svg>
<svg style="position:absolute;left:2487.9px;top:662.8px;overflow:visible;" width="29" height="31" viewBox="0 0 29 31"><path d="M23.8 3.8L26.6 0.7L27.9 1.3V13.9H15.2L19.1 8.6A7.7 7.7 0 1 0 22.2 17.5Q25.6 18.4 27.5 21.9A14.4 14.4 0 1 1 23.8 3.8Z" fill="#e9f0f9" stroke="#a9b3c5" stroke-width="1.1" stroke-linejoin="round"/></svg>
<div style="position:absolute;left:1394.2px;top:709.8px;width:25.4px;height:25.4px;box-sizing:border-box;background:#fff;border:2px solid #ababab;border-radius:5.5px;"></div>
<svg style="position:absolute;left:1430.4px;top:708.8px;overflow:visible;" width="41.6" height="25.6" viewBox="0 0 41.6 25.6"><path d="M8.6 25.4C3.4 25.4 0.2 22 0.2 18C0.2 14.4 2.6 11.6 6.2 10.8C6.6 4.6 11.4 0.2 17.4 0.2C22 0.2 25.6 2.6 27.4 6.2C28.4 5.6 29.6 5.4 30.8 5.4C34.6 5.4 37.4 8.2 37.4 12C39.8 13.2 41.4 15.6 41.4 18.4C41.4 22.4 38.2 25.4 34.2 25.4Z" fill="#1d97d3"/></svg>
<svg style="position:absolute;left:1555.6px;top:714.6px;overflow:visible;" width="12" height="18" viewBox="0 0 12 18"><path d="M1 1L10.4 9L1 17" fill="none" stroke="#b7bfcc" stroke-width="1.7"/></svg>
<svg style="position:absolute;left:2443.6px;top:705.1px;overflow:visible;" width="29.8" height="29.8" viewBox="0 0 29.8 29.8"><g transform="scale(0.9933333333333334)"><path d="M15 0.4L29.4 5.6V23.6L15 29.6L0.6 23.6V5.6Z" fill="#bfe5f5" stroke="#74c4e2" stroke-width="1"/>
<path d="M0.6 5.6L15 10.6L29.4 5.6M15 10.6V29.6" fill="none" stroke="#74c4e2" stroke-width="1"/><path d="M0.6 23.6L15 18.8L29.4 23.6M15 0.4V18.8" fill="none" stroke="#8fd0e8" stroke-width="0.8" opacity="0.8"/>
<text x="9" y="18.8" font-family="'Liberation Serif',serif" font-size="17.5" fill="#2a5cb0" stroke="#2a5cb0" stroke-width="0.3">R</text></g></svg>
<div style="position:absolute;left:2486.9px;top:700.9px;width:2.1px;height:39.6px;background:#cfd5d9;"></div>
<div style="position:absolute;left:1442.2px;top:742.55px;width:2px;height:36.5px;background:#d5dadd;"></div>
<div style="position:absolute;left:1494.2px;top:742.55px;width:2px;height:36.5px;background:#d5dadd;"></div>
<div style="position:absolute;left:2047.2px;top:742.55px;width:2px;height:36.5px;background:#d5dadd;"></div>
<div style="position:absolute;left:2205.8px;top:742.55px;width:2px;height:36.5px;background:#d5dadd;"></div>
<div style="position:absolute;left:2525px;top:742.55px;width:2px;height:36.5px;background:#d5dadd;"></div>
<svg style="position:absolute;left:1506px;top:753.8px;overflow:visible;" width="19" height="13.4" viewBox="0 0 19 13.4"><path d="M9.5 0L19 13.4H0Z" fill="#8a92a2"/></svg>
<svg style="position:absolute;left:1457.6px;top:786.6px;overflow:visible;" width="27" height="27" viewBox="0 0 27 27"><path d="M10 0.6L19.4 11H14V20.6H26.2V26.4H6.4V11H0.8Z" fill="#47b572" stroke="#2f9a58" stroke-width="1.1" stroke-linejoin="round"/></svg>
<div style="position:absolute;left:1406.2px;top:836px;width:25.4px;height:25.4px;box-sizing:border-box;background:#fff;border:2px solid #ababab;border-radius:5.5px;"></div>
<div style="position:absolute;left:1406.2px;top:881.6px;width:25.4px;height:25.4px;box-sizing:border-box;background:#fff;border:2px solid #ababab;border-radius:5.5px;"></div>
<div style="position:absolute;left:1406.2px;top:927.2px;width:25.4px;height:25.4px;box-sizing:border-box;background:#fff;border:2px solid #ababab;border-radius:5.5px;"></div>
<svg style="position:absolute;left:1455px;top:830.6px;overflow:visible;" width="32" height="31" viewBox="0 0 32 31"><path d="M5.6 0.6H22.4L30.6 8.8V30H5.6Z" fill="#fff" stroke="#c9ced6" stroke-width="1"/><path d="M22.4 0.6V8.8H30.6" fill="#eef0f3" stroke="#c9ced6" stroke-width="1"/><path d="M31.2 10V30.6H7" stroke="#8a8f98" stroke-width="1" fill="none" opacity="0.8"/><circle cx="9.4" cy="13.8" r="8.2" fill="#f5f7fa" stroke="#aab1bd" stroke-width="1"/><path d="M9.2 8.6V14.4H13.4" stroke="#222" stroke-width="1.4" fill="none"/></svg>
<svg style="position:absolute;left:1455.6px;top:879px;overflow:visible;" width="32" height="26.5" viewBox="0 0 32 26.5"><defs><linearGradient id="fg2" x1="0" y1="0" x2="0" y2="1"><stop offset="0" stop-color="#fbefb4"/><stop offset="1" stop-color="#eab83c"/></linearGradient></defs>
<path d="M14.6 4.6L18.6 0.8H28.4L31.4 4.2V24.2H14.6Z" fill="#eef0f0" stroke="#d6ad48" stroke-width="1"/><path d="M0.6 6.6H28.6V25.8H0.6Z" fill="url(#fg2)" stroke="#d6a838" stroke-width="1"/></svg>
<svg style="position:absolute;left:1456.4px;top:924px;overflow:visible;" width="30" height="30" viewBox="0 0 30 30"><g transform="scale(1.0)"><path d="M15 0.4L29.4 5.6V23.6L15 29.6L0.6 23.6V5.6Z" fill="#bfe5f5" stroke="#74c4e2" stroke-width="1"/>
<path d="M0.6 5.6L15 10.6L29.4 5.6M15 10.6V29.6" fill="none" stroke="#74c4e2" stroke-width="1"/><path d="M0.6 23.6L15 18.8L29.4 23.6M15 0.4V18.8" fill="none" stroke="#8fd0e8" stroke-width="0.8" opacity="0.8"/>
<text x="9" y="18.8" font-family="'Liberation Serif',serif" font-size="17.5" fill="#2a5cb0" stroke="#2a5cb0" stroke-width="0.3">R</text></g></svg>
<div style="position:absolute;left:0px;top:1330px;width:2546px;height:76px;background:linear-gradient(to bottom,rgba(0,0,0,0),rgba(0,0,0,0.055));-webkit-mask-image:linear-gradient(to right,rgba(0,0,0,0) 90px,#000 420px);mask-image:linear-gradient(to right,rgba(0,0,0,0) 90px,#000 420px);"></div>
<div style="position:absolute;left:0px;top:1406px;width:2546px;height:8px;background:linear-gradient(to right,#f1f3f5 20px,#e3e5e8 300px);"></div>
<div style="position:absolute;left:0px;top:1414px;width:2546px;height:3px;background:#fff;"></div>
<div style="position:absolute;left:2541px;top:0px;width:5px;height:1417px;background:#fff;"></div>
<div id="tx">
<div class="t" style="left:93.00px;top:25.80px;font-family:'Liberation Sans',sans-serif;font-weight:normal;font-size:36px;letter-spacing:1.144px;color:#4a7ba7;">Introduction To R</div>
<div class="t" style="left:393.20px;top:25.80px;font-family:'Liberation Sans',sans-serif;font-weight:normal;font-size:36px;letter-spacing:0.000px;color:#999;">/</div>
<div class="t" style="left:421.80px;top:25.80px;font-family:'Liberation Sans',sans-serif;font-weight:normal;font-size:36px;letter-spacing:1.044px;color:#2b2b2b;">Intro-to-R</div>
<div class="t" style="left:1822.20px;top:46.10px;font-family:'Liberation Sans',sans-serif;font-weight:normal;font-size:17.6px;letter-spacing:-0.500px;color:#cfcfcf;">RAM</div>
<div class="t" style="left:2159.00px;top:32.70px;font-family:'Liberation Sans',sans-serif;font-weight:normal;font-size:27.5px;letter-spacing:-0.011px;color:#333;">William Gammerdinger</div>
<div class="t" style="left:41.60px;top:123.90px;font-family:'DejaVu Sans Condensed','DejaVu Sans',sans-serif;font-weight:bold;font-size:22px;letter-spacing:-0.033px;color:#404040;">File</div>
<div class="t" style="left:115.70px;top:123.90px;font-family:'DejaVu Sans Condensed','DejaVu Sans',sans-serif;font-weight:bold;font-size:22px;letter-spacing:0.267px;color:#404040;">Edit</div>
<div class="t" style="left:196.80px;top:123.90px;font-family:'DejaVu Sans Condensed','DejaVu Sans',sans-serif;font-weight:bold;font-size:22px;letter-spacing:0.700px;color:#404040;">Code</div>
<div class="t" style="left:290.50px;top:123.90px;font-family:'DejaVu Sans Condensed','DejaVu Sans',sans-serif;font-weight:bold;font-size:22px;letter-spacing:0.067px;color:#404040;">View</div>
<div class="t" style="left:378.50px;top:123.90px;font-family:'DejaVu Sans Condensed','DejaVu Sans',sans-serif;font-weight:bold;font-size:22px;letter-spacing:0.250px;color:#404040;">Plots</div>
<div class="t" style="left:470.80px;top:123.90px;font-family:'DejaVu Sans Condensed','DejaVu Sans',sans-serif;font-weight:bold;font-size:22px;letter-spacing:0.150px;color:#404040;">Session</div>
<div class="t" style="left:591.50px;top:123.90px;font-family:'DejaVu Sans Condensed','DejaVu Sans',sans-serif;font-weight:bold;font-size:22px;letter-spacing:0.650px;color:#404040;">Build</div>
<div class="t" style="left:685.00px;top:123.90px;font-family:'DejaVu Sans Condensed','DejaVu Sans',sans-serif;font-weight:bold;font-size:22px;letter-spacing:0.625px;color:#404040;">Debug</div>
<div class="t" style="left:794.90px;top:123.90px;font-family:'DejaVu Sans Condensed','DejaVu Sans',sans-serif;font-weight:bold;font-size:22px;letter-spacing:0.000px;color:#404040;">Profile</div>
<div class="t" style="left:903.80px;top:123.90px;font-family:'DejaVu Sans',sans-serif;font-weight:bold;font-size:22px;letter-spacing:-0.200px;color:#404040;">Tools</div>
<div class="t" style="left:1001.00px;top:123.90px;font-family:'DejaVu Sans Condensed','DejaVu Sans',sans-serif;font-weight:bold;font-size:22px;letter-spacing:0.667px;color:#404040;">Help</div>
<div class="t n" style="left:216.50px;top:170.70px;font-family:'DejaVu Sans',sans-serif;font-weight:normal;font-size:19.4px;letter-spacing:1.356px;color:#444;">Intro-to-R</div>
<div class="t n" style="left:419.80px;top:178.10px;font-family:'DejaVu Sans',sans-serif;font-weight:normal;font-size:21px;letter-spacing:-0.494px;color:#a9a9a9;">Go to file/function</div>
<div class="t n" style="left:763.90px;top:177.00px;font-family:'DejaVu Sans',sans-serif;font-weight:normal;font-size:22px;letter-spacing:-0.380px;color:#000;">Addins</div>
<div class="t n" style="left:2316.70px;top:177.00px;font-family:'DejaVu Sans',sans-serif;font-weight:normal;font-size:22px;letter-spacing:-0.167px;color:#707070;">R 4.4.3</div>
<div class="t" style="left:30.30px;top:238.80px;font-family:'DejaVu Sans Condensed','DejaVu Sans',sans-serif;font-weight:bold;font-size:22px;letter-spacing:0.333px;color:#000;">Console</div>
<div class="t" style="left:158.40px;top:238.80px;font-family:'DejaVu Sans Condensed','DejaVu Sans',sans-serif;font-weight:bold;font-size:22px;letter-spacing:0.786px;color:#000;">Terminal</div>
<div class="t" style="left:321.40px;top:238.80px;font-family:'DejaVu Sans Condensed','DejaVu Sans',sans-serif;font-weight:bold;font-size:22px;letter-spacing:0.400px;color:#000;">Background Jobs</div>
<div class="t n" style="left:85.40px;top:284.00px;font-family:'DejaVu Sans',sans-serif;font-weight:normal;font-size:23px;letter-spacing:0.183px;color:#000;">R 4.4.3</div>
<div class="t n" style="left:180.10px;top:284.00px;font-family:'DejaVu Sans Condensed','DejaVu Sans',sans-serif;font-weight:normal;font-size:23px;letter-spacing:0.000px;color:#000;">·</div>
<div class="t n" style="left:202.50px;top:284.00px;font-family:'DejaVu Sans',sans-serif;font-weight:normal;font-size:23px;letter-spacing:-0.129px;color:#0e1f3d;">/cloud/project/</div>
<div class="t" style="left:1401.90px;top:238.80px;font-family:'DejaVu Sans Condensed','DejaVu Sans',sans-serif;font-weight:bold;font-size:22px;letter-spacing:0.130px;color:#000;">Environment</div>
<div class="t" style="left:1581.70px;top:238.80px;font-family:'DejaVu Sans Condensed','DejaVu Sans',sans-serif;font-weight:bold;font-size:22px;letter-spacing:0.467px;color:#000;">History</div>
<div class="t" style="left:1703.30px;top:238.80px;font-family:'DejaVu Sans Condensed','DejaVu Sans',sans-serif;font-weight:bold;font-size:22px;letter-spacing:0.190px;color:#000;">Connections</div>
<div class="t" style="left:1881.10px;top:238.80px;font-family:'DejaVu Sans',sans-serif;font-weight:bold;font-size:22px;letter-spacing:-0.614px;color:#000;">Tutorial</div>
<div class="t n" style="left:1548.80px;top:284.70px;font-family:'DejaVu Sans',sans-serif;font-weight:normal;font-size:22px;letter-spacing:-0.554px;color:#000;">Import Dataset</div>
<div class="t n" style="left:1797.30px;top:284.70px;font-family:'DejaVu Sans',sans-serif;font-weight:normal;font-size:22px;letter-spacing:-0.333px;color:#000;">126 MiB</div>
<div class="t n" style="left:2377.90px;top:284.70px;font-family:'DejaVu Sans',sans-serif;font-weight:normal;font-size:22px;letter-spacing:-0.200px;color:#000;">List</div>
<div class="t n" style="left:1399.70px;top:326.70px;font-family:'DejaVu Sans Condensed','DejaVu Sans',sans-serif;font-weight:normal;font-size:22px;letter-spacing:0.000px;color:#000;">R</div>
<div class="t n" style="left:1510.60px;top:326.70px;font-family:'DejaVu Sans',sans-serif;font-weight:normal;font-size:22px;letter-spacing:-0.447px;color:#000;">Global Environment</div>
<div class="t n" style="left:1841.50px;top:438.40px;font-family:'DejaVu Sans Condensed','DejaVu Sans',sans-serif;font-weight:normal;font-size:22px;letter-spacing:0.521px;color:#000;">Environment is empty</div>
<div class="t" style="left:1401.90px;top:622.60px;font-family:'DejaVu Sans Condensed','DejaVu Sans',sans-serif;font-weight:bold;font-size:22px;letter-spacing:-0.200px;color:#000;">Files</div>
<div class="t" style="left:1491.40px;top:622.60px;font-family:'DejaVu Sans Condensed','DejaVu Sans',sans-serif;font-weight:bold;font-size:22px;letter-spacing:-0.050px;color:#000;">Plots</div>
<div class="t" style="left:1584.50px;top:622.60px;font-family:'DejaVu Sans Condensed','DejaVu Sans',sans-serif;font-weight:bold;font-size:22px;letter-spacing:0.143px;color:#000;">Packages</div>
<div class="t" style="left:1727.50px;top:622.60px;font-family:'DejaVu Sans Condensed','DejaVu Sans',sans-serif;font-weight:bold;font-size:22px;letter-spacing:0.400px;color:#000;">Help</div>
<div class="t" style="left:1817.80px;top:622.60px;font-family:'DejaVu Sans Condensed','DejaVu Sans',sans-serif;font-weight:bold;font-size:22px;letter-spacing:-0.060px;color:#000;">Viewer</div>
<div class="t" style="left:1931.30px;top:622.60px;font-family:'DejaVu Sans Condensed','DejaVu Sans',sans-serif;font-weight:bold;font-size:22px;letter-spacing:-0.073px;color:#000;">Presentation</div>
<div class="t n" style="left:1440.30px;top:668.90px;font-family:'DejaVu Sans',sans-serif;font-weight:normal;font-size:22px;letter-spacing:-0.611px;color:#000;">New Folder</div>
<div class="t n" style="left:1633.70px;top:668.90px;font-family:'DejaVu Sans',sans-serif;font-weight:normal;font-size:22px;letter-spacing:-0.500px;color:#000;">New Blank File</div>
<div class="t n" style="left:1884.50px;top:668.90px;font-family:'DejaVu Sans',sans-serif;font-weight:normal;font-size:22px;letter-spacing:-0.080px;color:#000;">Upload</div>
<div class="t n" style="left:2036.90px;top:668.90px;font-family:'DejaVu Sans Condensed','DejaVu Sans',sans-serif;font-weight:normal;font-size:22px;letter-spacing:0.680px;color:#000;">Delete</div>
<div class="t n" style="left:2168.30px;top:668.90px;font-family:'DejaVu Sans Condensed','DejaVu Sans',sans-serif;font-weight:normal;font-size:22px;letter-spacing:0.660px;color:#000;">Rename</div>
<div class="t n" style="left:2330.10px;top:668.90px;font-family:'DejaVu Sans',sans-serif;font-weight:normal;font-size:22px;letter-spacing:-0.100px;color:#000;">More</div>
<div class="t n" style="left:1482.30px;top:713.10px;font-family:'DejaVu Sans',sans-serif;font-weight:normal;font-size:22px;letter-spacing:-0.225px;color:#2348a8;">Cloud</div>
<div class="t n" style="left:1577.70px;top:713.10px;font-family:'DejaVu Sans',sans-serif;font-weight:normal;font-size:22px;letter-spacing:-0.233px;color:#2348a8;">project</div>
<div class="t n" style="left:2498.90px;top:710.80px;font-family:'DejaVu Sans',sans-serif;font-weight:normal;font-size:22px;letter-spacing:-0.200px;color:#000;">...</div>
<div class="t n" style="left:1532.70px;top:751.60px;font-family:'DejaVu Sans Condensed','DejaVu Sans',sans-serif;font-weight:normal;font-size:22px;letter-spacing:0.767px;color:#36434a;">Name</div>
<div class="t n" style="left:2053.30px;top:751.60px;font-family:'DejaVu Sans Condensed','DejaVu Sans',sans-serif;font-weight:normal;font-size:22px;letter-spacing:0.533px;color:#36434a;">Size</div>
<div class="t n" style="left:2211.70px;top:751.60px;font-family:'DejaVu Sans',sans-serif;font-weight:normal;font-size:22px;letter-spacing:0.029px;color:#36434a;">Modified</div>
<div class="t" style="left:1502.40px;top:795.20px;font-family:'DejaVu Sans Condensed','DejaVu Sans',sans-serif;font-weight:bold;font-size:22px;letter-spacing:-0.700px;color:#1f2a8c;">..</div>
<div class="t n" style="left:1501.70px;top:839.80px;font-family:'DejaVu Sans',sans-serif;font-weight:normal;font-size:22.8px;letter-spacing:0.162px;color:#1f2a8c;">.Rhistory</div>
<div class="t n" style="left:1502.30px;top:885.20px;font-family:'DejaVu Sans',sans-serif;font-weight:normal;font-size:22.8px;letter-spacing:-0.600px;color:#1f2a8c;">data</div>
<div class="t n" style="left:1501.70px;top:930.60px;font-family:'DejaVu Sans',sans-serif;font-weight:normal;font-size:22.8px;letter-spacing:0.508px;color:#1f2a8c;">project.Rproj</div>
<div class="t n" style="left:2055.50px;top:839.80px;font-family:'DejaVu Sans',sans-serif;font-weight:normal;font-size:22.8px;letter-spacing:-0.250px;color:#000;">0 B</div>
<div class="t n" style="left:2054.50px;top:930.60px;font-family:'DejaVu Sans',sans-serif;font-weight:normal;font-size:22.8px;letter-spacing:0.575px;color:#000;">205 B</div>
<div class="t n" style="left:2213.70px;top:839.80px;font-family:'DejaVu Sans',sans-serif;font-weight:normal;font-size:22.8px;letter-spacing:0.410px;color:#000;">May 28, 2025, 4:43 PM</div>
<div class="t n" style="left:2213.70px;top:930.60px;font-family:'DejaVu Sans',sans-serif;font-weight:normal;font-size:22.8px;letter-spacing:0.410px;color:#000;">May 29, 2025, 4:05 PM</div>
<div class="t" style="left:1951.50px;top:1372.00px;font-family:'Liberation Sans',sans-serif;font-weight:normal;font-size:40px;letter-spacing:-0.726px;color:#000;">Harvard Chan Bioinformatics Core</div>
</div>
<div style="position:absolute;left:1386px;top:649.7px;width:186px;height:59.1px;box-sizing:border-box;border:4.1px solid #e32227;"></div>
<svg style="position:absolute;left:0;top:0;overflow:visible" width="2546" height="1417"><path d="M1756 864L1600 735.4" stroke="#e32227" stroke-width="5.4" fill="none"/><path d="M1578.7 717.6L1614 713.8L1582 752.8Z" fill="#e32227"/></svg>
</div></body></html>
